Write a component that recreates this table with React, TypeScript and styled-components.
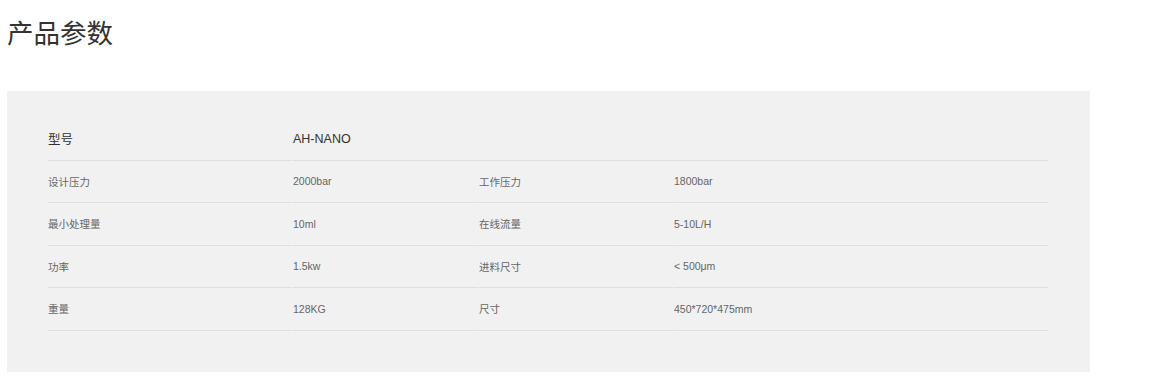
import React from "react";
import styled, { createGlobalStyle } from "styled-components";

const GlobalStyle = createGlobalStyle`
  html, body {
    margin: 0;
    padding: 0;
    background: #fff;
    font-family: "Liberation Sans", "Noto Sans CJK SC", sans-serif;
  }
`;

const Page = styled.div`
  padding: 14px 7px 15px;
`;

const Title = styled.h2`
  margin: 0 0 37px;
  font-size: 26.5px;
  line-height: 40px;
  font-weight: 400;
  color: #333;
`;

const Panel = styled.div`
  width: 1083px;
  box-sizing: border-box;
  background: #f1f1f1;
  padding: 27px 41px 41px;
`;

const Table = styled.table`
  width: 1002px;
  border-collapse: separate;
  border-spacing: 1px 0;
  margin-left: -1px;
  table-layout: fixed;
`;

const Cell = styled.td<{ $head?: boolean }>`
  height: 42.5px;
  box-sizing: border-box;
  padding: 0;
  border-bottom: 1px solid #dedede;
  vertical-align: middle;
  font-size: ${(p) => (p.$head ? "12.5px" : "10.5px")};
  color: ${(p) => (p.$head ? "#333" : "#666")};
  white-space: nowrap;
`;

const rows: [string, string, string, string][] = [
  ["设计压力", "2000bar", "工作压力", "1800bar"],
  ["最小处理量", "10ml", "在线流量", "5-10L/H"],
  ["功率", "1.5kw", "进料尺寸", "< 500μm"],
  ["重量", "128KG", "尺寸", "450*720*475mm"],
];

export default function App() {
  return (
    <Page>
      <GlobalStyle />
      <Title>产品参数</Title>
      <Panel>
        <Table>
          <colgroup>
            <col style={{ width: 244 }} />
            <col style={{ width: 185 }} />
            <col style={{ width: 194 }} />
            <col />
          </colgroup>
          <tbody>
            <tr>
              <Cell $head>型号</Cell>
              <Cell $head colSpan={3}>AH-NANO</Cell>
            </tr>
            {rows.map((r) => (
              <tr key={r[0]}>
                {r.map((c, i) => (
                  <Cell key={i}>{c}</Cell>
                ))}
              </tr>
            ))}
          </tbody>
        </Table>
      </Panel>
    </Page>
  );
}
